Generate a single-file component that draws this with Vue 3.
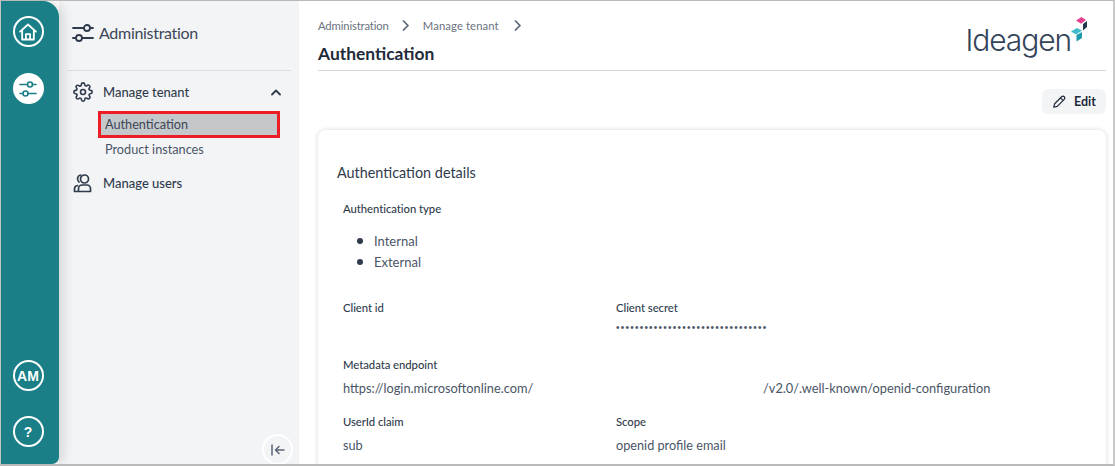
<script setup>
const navSub = [
  { label: 'Authentication', active: true },
  { label: 'Product instances', active: false }
]
const secret = '•'.repeat(32)
</script>

<template>
  <div class="frame">
    <aside class="rail">
      <div class="rail-group top">
        <button class="round">
          <svg width="20" height="20" viewBox="0 0 24 24" fill="none" stroke="#fff" stroke-width="2.2" stroke-linejoin="round" stroke-linecap="round"><path d="M2.500 11.500 12 3l9.500 8.500M5 9.500V21h14V9.500M9.500 21v-6.500h5V21"/></svg>
        </button>
        <button class="round solid">
          <svg width="18" height="20" viewBox="0 0 18 20" fill="none" stroke="#1a7f87" stroke-width="1.600" stroke-linecap="round"><path d="M1 5.500h7.500M13.500 5.500H17M1 14.500h3M9 14.500h8"/><circle cx="11" cy="5.500" r="2.500"/><circle cx="6.500" cy="14.500" r="2.500"/></svg>
        </button>
      </div>
      <div class="rail-group bottom">
        <button class="round txt">AM</button>
        <button class="round txt q">?</button>
      </div>
    </aside>

    <nav class="side">
      <div class="side-head">
        <svg width="22" height="18" viewBox="0 0 22 18" fill="none" stroke="#2f3b4c" stroke-width="1.800" stroke-linecap="round"><path d="M1 4h11M18 4h3M1 14h3M10 14h11"/><circle cx="15" cy="4" r="3"/><circle cx="7" cy="14" r="3"/></svg>
        <span class="side-title">Administration</span>
      </div>
      <div class="side-item first">
        <svg width="20" height="20" viewBox="0 0 24 24" fill="none" stroke="#2f3b4c" stroke-width="1.900" stroke-linecap="round" stroke-linejoin="round"><circle cx="12" cy="12" r="3"/><path d="M19.400 15a1.650 1.650 0 0 0 .33 1.820l.06.06a2 2 0 1 1-2.830 2.830l-.06-.06a1.650 1.650 0 0 0-2.800 1.170V21a2 2 0 1 1-4 0v-.09a1.650 1.650 0 0 0-2.800-1.200l-.06.06a2 2 0 1 1-2.830-2.830l.06-.06a1.650 1.650 0 0 0-1.170-2.800H3a2 2 0 1 1 0-4h.09a1.650 1.650 0 0 0 1.200-2.800l-.06-.06a2 2 0 1 1 2.830-2.830l.06.06a1.650 1.650 0 0 0 1.820.33H9a1.650 1.650 0 0 0 1-1.510V3a2 2 0 1 1 4 0v.09a1.650 1.650 0 0 0 2.800 1.200l.06-.06a2 2 0 1 1 2.830 2.830l-.06.06a1.650 1.650 0 0 0-.33 1.820V9a1.650 1.650 0 0 0 1.510 1H21a2 2 0 1 1 0 4h-.09a1.650 1.650 0 0 0-1.510 1z"/></svg>
        <span class="grow">Manage tenant</span>
        <svg class="chev" width="10" height="7" viewBox="0 0 10 7" fill="none" stroke="#2f3b4c" stroke-width="1.800" stroke-linecap="round" stroke-linejoin="round"><path d="M1 5.500 5 1.500l4 4"/></svg>
      </div>
      <ul class="sub">
        <li v-for="s in navSub" :key="s.label" :class="{ active: s.active }">{{ s.label }}</li>
      </ul>
      <div class="side-item">
        <svg width="20" height="20" viewBox="0 0 20 20" fill="none" stroke="#2f3b4c" stroke-width="1.700" stroke-linecap="round" stroke-linejoin="round"><circle cx="11.500" cy="6" r="4"/><path d="M5.500 18.500v-3a3.500 3.500 0 0 1 3.500-3.500h5a3.500 3.500 0 0 1 3.500 3.500v3zM5.500 18.500H1.500v-2.500a3.500 3.500 0 0 1 3-3.500M7.500 2a4 4 0 0 0-1.500 7"/></svg>
        <span class="grow">Manage users</span>
      </div>
      <button class="collapse">
        <svg width="14" height="12" viewBox="0 0 14 12" fill="none" stroke="#5a6577" stroke-width="1.500" stroke-linecap="round" stroke-linejoin="round"><path d="M1 1v10M13 6H4.500M8 2.500 4.500 6 8 9.500"/></svg>
      </button>
    </nav>

    <main class="main">
      <header class="head">
        <div class="head-text">
          <div class="crumbs">
            <span>Administration</span>
            <svg width="8" height="11" viewBox="0 0 8 11" fill="none" stroke="#5a6577" stroke-width="1.700" stroke-linecap="round" stroke-linejoin="round"><path d="M1.500 1 6 5.500 1.500 10"/></svg>
            <span class="crumb-wide">Manage tenant</span>
            <svg class="crumb-last" width="8" height="11" viewBox="0 0 8 11" fill="none" stroke="#5a6577" stroke-width="1.700" stroke-linecap="round" stroke-linejoin="round"><path d="M1.500 1 6 5.500 1.500 10"/></svg>
          </div>
          <h1>Authentication</h1>
        </div>
        <div class="logo">
          <span>Ideagen</span>
          <svg class="cube" width="17" height="25" viewBox="0 0 17 25">
            <path d="M5 3.500 10.500 0 15 3 10 6.700z" fill="#e3418f"/>
            <path d="M12 7 16 4V10L12 13.500z" fill="#26364d"/>
            <path d="M0 14.500 6 11 11 13.500 5 17.500z" fill="#3fbccb"/>
            <path d="M5.500 18 11 15V21L5.500 24.500z" fill="#1f9aab"/>
          </svg>
        </div>
      </header>

      <div class="actions">
        <button class="edit">
          <svg width="14" height="14" viewBox="0 0 24 24" fill="none" stroke="#1e2a3a" stroke-width="2" stroke-linecap="round" stroke-linejoin="round"><path d="M3 21l1.500-6L16.500 3a2.800 2.800 0 0 1 4.500 4.500L9 19.500zM14.500 5l4.500 4.500"/></svg>
          <span>Edit</span>
        </button>
      </div>

      <section class="card">
        <h2>Authentication details</h2>
        <div class="body">
          <div class="label type">Authentication type</div>
          <ul class="types">
            <li>Internal</li>
            <li>External</li>
          </ul>
          <div class="row r1">
            <div class="cell"><div class="label">Client id</div></div>
            <div class="cell">
              <div class="label">Client secret</div>
              <div class="secret">{{ secret }}</div>
            </div>
          </div>
          <div class="meta">
            <div class="label">Metadata endpoint</div>
            <div class="url"><span class="u1">https://login.microsoftonline.com/</span><span>/v2.0/.well-known/openid-configuration</span></div>
          </div>
          <div class="row r3">
            <div class="cell"><div class="label">UserId claim</div><div class="val">sub</div></div>
            <div class="cell"><div class="label">Scope</div><div class="val">openid profile email</div></div>
          </div>
        </div>
      </section>
    </main>
  </div>
</template>

<style scoped>
.frame {
  width: 1115px;
  height: 466px;
  box-sizing: border-box;
  display: flex;
  overflow: hidden;
  background: #fff;
  border-top: 1px solid #b9b9b9;
  border-bottom: 2px solid #b9b9b9;
  border-left: 1px solid #c4c4c4;
  border-right: 2px solid #c9c9c9;
  font-family: Lato, "Open Sans", sans-serif;
  color: #2f3b4c;
}
button { font-family: inherit; padding: 0; cursor: pointer; }
.rail {
  width: 58px;
  flex: none;
  background: #1a7f87;
  border-radius: 0 16px 7px 0;
  box-shadow: 4px 0 12px rgba(0, 0, 0, .13);
  display: flex;
  flex-direction: column;
  justify-content: space-between;
  align-items: center;
  position: relative;
  z-index: 1;
  padding: 15px 4px 17px 0;
  box-sizing: border-box;
}
.rail-group { display: flex; flex-direction: column; gap: 26px; }
.round {
  width: 31px;
  height: 31px;
  border-radius: 50%;
  border: 2px solid #fff;
  background: transparent;
  color: #fff;
  display: flex;
  align-items: center;
  justify-content: center;
}
.round.solid { background: #fff; }
.txt { font-family: "Liberation Sans", sans-serif; font-weight: 700; font-size: 14px; }
.bottom { gap: 25px; }
.side {
  width: 240px;
  flex: none;
  background: #f3f4f6;
  padding: 0 8px;
  box-sizing: border-box;
  position: relative;
  display: flex;
  flex-direction: column;
}
.side-head {
  height: 70px;
  flex: none;
  display: flex;
  align-items: center;
  gap: 5px;
  padding: 0 0 5px 5px;
  border-bottom: 1px solid #dcdee2;
  font-size: 16px;
  letter-spacing: -.3px;
  color: #3b4656;
  box-sizing: border-box;
}
.side-title { margin-bottom: 2px; }
.side-item {
  display: flex;
  align-items: center;
  height: 24px;
  padding-left: 6px;
  gap: 10px;
  font-size: 13px;
  font-weight: 500;
}
.side-item.first { margin-top: 9px; }
.grow { flex: 1; }
.chev { margin-right: 10px; }
.sub { list-style: none; margin: 7px 0 9px; padding: 0 0 0 31px; font-size: 12.700px; }
.sub li { height: 25px; line-height: 25px; padding-left: 7px; width: 182px; box-sizing: border-box; color: #4a5566; }
.sub li.active {
  height: 27px;
  line-height: 21px;
  background: #c5c8cb;
  border: 3px solid #ee1c25;
  margin-bottom: -1px;
  padding-left: 4px;
  color: #3b4656;
}
.collapse {
  position: absolute;
  right: 6px;
  bottom: -1px;
  width: 31px;
  height: 31px;
  border-radius: 50%;
  border: 2px solid #fff;
  background: #f3f4f6;
  display: flex;
  align-items: center;
  justify-content: center;
}
.main { flex: 1; padding: 0 7px 0 19px; min-width: 0; }
.head {
  height: 70px;
  box-sizing: border-box;
  border-bottom: 1px solid #d5d7dc;
  display: flex;
  justify-content: space-between;
}
.crumbs {
  margin-top: 17px;
  display: flex;
  align-items: center;
  gap: 13px;
  font-size: 11.300px;
  letter-spacing: -.15px;
  color: #6b7280;
  height: 15px;
}
.crumb-wide { letter-spacing: .1px; }
.crumb-last { margin-left: 2px; }
h1 { margin: 11px 0 0; font-size: 17.400px; font-weight: 700; color: #1e2a3a; line-height: 20px; }
.logo { display: flex; align-items: flex-start; margin-right: 18px; color: #33445a; }
.logo span { font-family: Inter, sans-serif; font-size: 30px; font-weight: 300; line-height: 36px; margin-top: 21px; letter-spacing: -1.100px; }
.cube { margin-top: 16px; }
.actions { display: flex; justify-content: flex-end; margin-top: 18px; }
.edit {
  width: 64px;
  height: 25px;
  background: #f3f4f6;
  border: 0;
  border-radius: 6px;
  display: flex;
  align-items: center;
  justify-content: center;
  gap: 8px;
  font-size: 12.500px;
  font-weight: 700;
  color: #1e2a3a;
}
.card {
  margin-top: 16px;
  border-radius: 8px;
  box-shadow: 0 0 5px rgba(0, 0, 0, .16);
  padding: 33px 19px 0;
  height: 400px;
}
h2 { margin: 0; font-size: 14.400px; font-weight: 400; line-height: 20px; color: #2f3b4c; }
.body { padding-left: 6px; }
.label { font-size: 11.300px; letter-spacing: -.05px; line-height: 16px; font-weight: 500; color: #2f3b4c; }
.type { margin-top: 18px; }
.types { list-style: none; margin: 14px 0 0; padding: 0 0 0 14px; font-size: 13px; line-height: 21px; color: #4a5566; }
.types li::before {
  content: "";
  display: inline-block;
  width: 6px;
  height: 6px;
  border-radius: 50%;
  background: #2f3b4c;
  margin-right: 11px;
  vertical-align: 2px;
}
.row { display: flex; }
.cell { width: 273px; }
.r1 { margin-top: 27px; height: 57px; }
.secret { font-family: "Liberation Sans", sans-serif; font-size: 10px; line-height: 12px; margin-top: 6px; color: #4a5566; letter-spacing: 1.230px; white-space: nowrap; }
.meta { height: 49px; }
.url { display: flex; font-size: 12.800px; line-height: 18px; margin-top: 6px; color: #4a5566; }
.u1 { width: 420px; flex: none; }
.r3 { margin-top: 8px; }
.val { font-size: 12.700px; line-height: 18px; margin-top: 6px; color: #4a5566; }
</style>
